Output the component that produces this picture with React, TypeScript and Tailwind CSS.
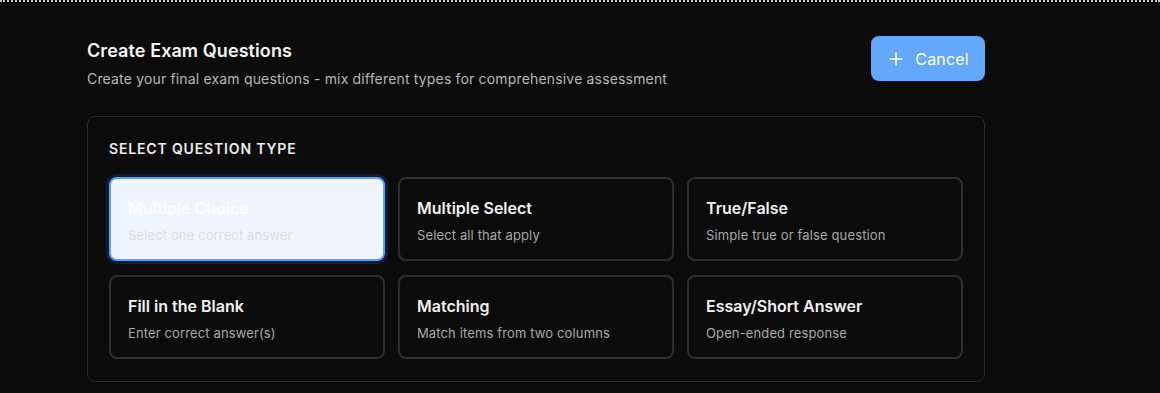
import React from "react";

const types = [
  { title: "Multiple Choice", desc: "Select one correct answer" },
  { title: "Multiple Select", desc: "Select all that apply" },
  { title: "True/False", desc: "Simple true or false question" },
  { title: "Fill in the Blank", desc: "Enter correct answer(s)" },
  { title: "Matching", desc: "Match items from two columns" },
  { title: "Essay/Short Answer", desc: "Open-ended response" },
];

export default function App() {
  return (
    <div
      className="w-[1160px] h-[393px] bg-[#0b0b0b] border-t-2 border-dotted border-[#c9c9c9] overflow-hidden"
      style={{ fontFamily: "Inter, 'Noto Sans', sans-serif" }}
    >
      <div className="ml-[87px] w-[898px] pt-[35px]">
        <div className="flex justify-between items-start">
          <div>
            <h1 className="text-[18px] leading-[28px] font-semibold text-[#f5f5f5] tracking-[0.005em]">Create Exam Questions</h1>
            <p className="mt-[4px] text-[14px] leading-[20px] text-[#b8b8b8] tracking-[0.012em]">
              Create your final exam questions - mix different types for comprehensive assessment
            </p>
          </div>
          <button className="mt-[-1px] w-[114px] h-[45px] rounded-lg bg-[#63a8fb] text-white text-[16px] flex items-center justify-center gap-[12px] pl-[2px]">
            <svg width="14" height="14" viewBox="0 0 14 14" fill="none" stroke="white" strokeWidth="1.6" strokeLinecap="round">
              <path d="M7 1v12M1 7h12" />
            </svg>
            <span className="tracking-[0.01em]">Cancel</span>
          </button>
        </div>
        <div className="mt-[27px] border border-[#2a2a2a] rounded-lg px-[21px] pt-[22px] pb-[22px]">
          <div className="text-[14px] leading-[20px] font-semibold tracking-[0.06em] text-[#ececec]">SELECT QUESTION TYPE</div>
          <div className="mt-[18px] grid grid-cols-3 gap-x-[13px] gap-y-[14px]">
            {types.map((t, i) => {
              const sel = i === 0;
              return (
                <div
                  key={t.title}
                  className={
                    sel
                      ? "h-[84px] rounded-lg border-2 border-[#5ea2f5] bg-[#eef5ff] shadow-[0_0_0_3px_rgba(30,64,140,0.35)] px-[17px] pt-[17px]"
                      : "h-[84px] rounded-lg border-2 border-[#2e2e2e] bg-[#0b0b0b] px-[17px] pt-[17px]"
                  }
                >
                  <div className={sel ? "text-[16px] leading-[24px] font-semibold text-white" : "text-[16px] leading-[24px] font-semibold text-[#f2f2f2]"}>
                    {t.title}
                  </div>
                  <div className={sel ? "mt-[6px] text-[13px] leading-[18px] text-[#d8dde4] tracking-[0.01em]" : "mt-[6px] text-[13px] leading-[18px] text-[#a9a9a9] tracking-[0.01em]"}>
                    {t.desc}
                  </div>
                </div>
              );
            })}
          </div>
        </div>
      </div>
    </div>
  );
}
